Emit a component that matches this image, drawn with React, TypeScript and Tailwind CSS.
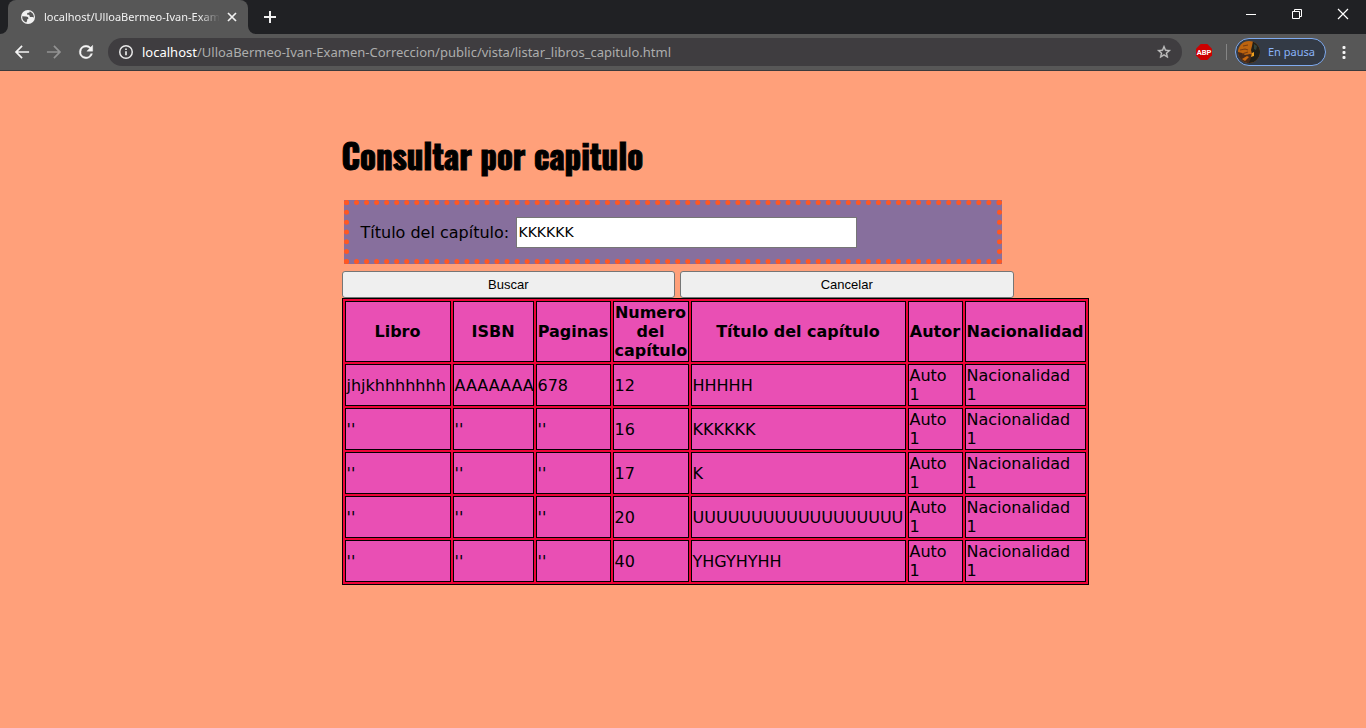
import { useState } from "react";

const headers = ["Libro", "ISBN", "Paginas", "Numero del capítulo", "Título del capítulo", "Autor", "Nacionalidad"];
const columnWidths = ["w-[106px]", "w-[81px]", "w-[75px]", "w-[76px]", "w-[215px]", "w-[55px]", "w-[121px]"];

const rows = [
  ["jhjkhhhhhhh", "AAAAAAA", "678", "12", "HHHHH", "Auto 1", "Nacionalidad 1"],
  ["''", "''", "''", "16", "KKKKKK", "Auto 1", "Nacionalidad 1"],
  ["''", "''", "''", "17", "K", "Auto 1", "Nacionalidad 1"],
  ["''", "''", "''", "20", "UUUUUUUUUUUUUUUUUU", "Auto 1", "Nacionalidad 1"],
  ["''", "''", "''", "40", "YHGYHYHH", "Auto 1", "Nacionalidad 1"],
];

function TabStrip() {
  return (
    <div className="flex h-[34px] items-stretch bg-[#202124]">
      <svg className="size-2 shrink-0 self-end" viewBox="0 0 8 8" aria-hidden="true">
        <path d="M8 0v8H0a8 8 0 0 0 8-8z" fill="#575757" />
      </svg>
      <div className="flex w-60 items-center rounded-t-lg bg-[#575757] pl-3 pr-2">
        <svg className="size-4 shrink-0" viewBox="0 0 16 16" aria-hidden="true">
          <circle cx="8" cy="8" r="7" fill="#f1f1f1" />
          <path d="M2.200 7.200L6 7.400c1.700.1 2.400.9 2.400 1.800 0 .7-.5 1-1.300 1v1.500c0 .6-.4 1-1 1.700C3.600 12.500 2 10.500 2.200 7.200zM9.600 2.400c.1.800-.3 1.300-1.100 1.400-.9.1-1.400.4-1.400 1.100 0 .6.5.8 1.200.8.900 0 1.200.5 1.300 1.200.1.800.7 1.200 1.500 1.200h1.500c.5 0 .9.300 1.200.7.400-3.200-1.400-5.600-4.200-6.400z" fill="#575757" />
        </svg>
        <span className="ml-2 w-44 shrink-0 whitespace-nowrap text-[11px] leading-4 text-[#f1f1f1] [mask-image:linear-gradient(to_right,black_88%,transparent)]">
          localhost/UlloaBermeo-Ivan-Exam
        </span>
        <button type="button" aria-label="Cerrar pestaña" className="ml-1 flex size-4 shrink-0 items-center justify-center">
          <svg className="size-4" viewBox="0 0 16 16" stroke="#f1f1f1" strokeWidth="1.7" aria-hidden="true">
            <path d="M4 4l8 8M12 4l-8 8" />
          </svg>
        </button>
      </div>
      <svg className="size-2 shrink-0 self-end" viewBox="0 0 8 8" aria-hidden="true">
        <path d="M0 0v8h8a8 8 0 0 1-8-8z" fill="#575757" />
      </svg>
      <button type="button" aria-label="Nueva pestaña" className="ml-1 flex w-5 items-center justify-center">
        <svg className="size-4" viewBox="0 0 16 16" stroke="#f1f1f1" strokeWidth="2" aria-hidden="true">
          <path d="M8 2v12M2 8h12" />
        </svg>
      </button>
      <div className="ml-auto flex h-7">
        <button type="button" aria-label="Minimizar" className="flex w-[46px] items-center justify-center">
          <svg className="size-3" viewBox="0 0 12 12" stroke="#fff" aria-hidden="true">
            <path d="M1 6.500h10" />
          </svg>
        </button>
        <button type="button" aria-label="Restaurar" className="flex w-[46px] items-center justify-center">
          <svg className="size-3" viewBox="0 0 12 12" fill="none" stroke="#fff" aria-hidden="true">
            <path d="M1.500 3.500h7v7h-7zM3.500 3.500v-2h7v7h-2" />
          </svg>
        </button>
        <button type="button" aria-label="Cerrar" className="flex w-[46px] items-center justify-center">
          <svg className="size-3" viewBox="0 0 12 12" stroke="#fff" strokeWidth="1.200" aria-hidden="true">
            <path d="M1 1l10 10M11 1L1 11" />
          </svg>
        </button>
      </div>
    </div>
  );
}

function Toolbar() {
  return (
    <div className="flex h-[37px] items-center border-b border-[#3a3a3c] bg-[#575757] pl-3">
      <button type="button" aria-label="Atrás" className="flex size-5 items-center justify-center">
        <svg className="size-5" viewBox="0 0 24 24" fill="#f5f5f5" aria-hidden="true">
          <path d="M20.500 11H7.200l5.600-5.600L11.400 4l-8 8 8 8 1.400-1.400L7.200 13h13.300z" />
        </svg>
      </button>
      <button type="button" aria-label="Adelante" className="ml-3 flex size-5 items-center justify-center">
        <svg className="size-5" viewBox="0 0 24 24" fill="#939393" aria-hidden="true">
          <path d="M3.500 11h13.300l-5.600-5.600L12.600 4l8 8-8 8-1.400-1.400 5.600-5.600H3.500z" />
        </svg>
      </button>
      <button type="button" aria-label="Recargar" className="ml-3 flex size-5 items-center justify-center">
        <svg className="size-5" viewBox="0 0 24 24" fill="#f5f5f5" stroke="#f5f5f5" strokeWidth="0.500" aria-hidden="true">
          <path d="M17.650 6.350A7.960 7.960 0 0 0 12 4a8 8 0 1 0 7.730 10h-2.080A6 6 0 1 1 12 6c1.660 0 3.140.69 4.220 1.780L13 11h7V4z" />
        </svg>
      </button>
      <div className="ml-3 flex h-7 flex-1 items-center rounded-full bg-[#3f3d40] px-2.5">
        <svg className="size-4 shrink-0" viewBox="0 0 16 16" fill="none" stroke="#e8e8e8" strokeWidth="1.500" aria-hidden="true">
          <circle cx="8" cy="8" r="6.250" />
          <path d="M8 7.200v4M8 4.500v1.500" strokeWidth="1.700" />
        </svg>
        <span className="ml-2 flex-1 whitespace-nowrap text-[13px] leading-5 text-[#adadad]">
          <span className="text-white">localhost</span>/UlloaBermeo-Ivan-Examen-Correccion/public/vista/listar_libros_capitulo.html
        </span>
        <button type="button" aria-label="Añadir a marcadores" className="flex size-4 items-center justify-center">
          <svg className="size-4" viewBox="0 0 24 24" fill="#c4c4c4" stroke="#c4c4c4" strokeWidth="0.500" aria-hidden="true">
            <path d="M22 9.240l-7.190-.62L12 2 9.190 8.630 2 9.240l5.460 4.730L5.820 21 12 17.270 18.180 21l-1.630-7.030zM12 15.400l-3.760 2.270 1-4.280-3.320-2.880 4.380-.38L12 6.100l1.710 4.040 4.380.38-3.320 2.880 1 4.280z" />
          </svg>
        </button>
      </div>
      <button type="button" aria-label="Adblock Plus" className="ml-3.5 flex size-4 items-center justify-center">
        <svg className="size-4" viewBox="0 0 16 16" aria-hidden="true">
          <path d="M4.700 0h6.600L16 4.700v6.600L11.300 16H4.700L0 11.300V4.700z" fill="#cc0000" />
          <text x="8" y="10.800" textAnchor="middle" fontSize="7.500" fontWeight="700" fontFamily="Roboto, sans-serif" fill="#fff">ABP</text>
        </svg>
      </button>
      <span className="ml-3.5 h-4 w-px bg-[#858585]" />
      <button type="button" className="ml-2 flex h-7 w-[91px] items-center rounded-full border border-[#7fabf0] bg-[#333a45] pl-0.5 text-[11px] text-[#8ab4f8]">
        <svg className="mr-2 size-[22px] shrink-0" viewBox="0 0 22 22" aria-hidden="true">
          <defs>
            <clipPath id="avatar">
              <circle cx="11" cy="11" r="11" />
            </clipPath>
          </defs>
          <g clipPath="url(#avatar)">
            <path d="M0 0h22v22H0z" fill="#bd640e" />
            <path d="M15 0l7 3v19H9l2-6 3-3-1-4 1-4z" fill="#211f18" />
            <path d="M0 11l4 1 3 2 5-1 2 1-3 8H0z" fill="#4a2a18" />
            <path d="M2 9l5-1 3 1M5 5l5-1M4 13l6-2" fill="none" stroke="#7a3d12" strokeWidth="1.200" />
            <path d="M4 18l5-3 2 1-4 4z" fill="#c9690f" />
            <path d="M14 12l2-1v4l-3 1z" fill="#f0a01c" />
            <path d="M16 3l3 2-1 4-2-1z" fill="#34443b" />
          </g>
        </svg>
        <span className="whitespace-nowrap">En pausa</span>
      </button>
      <button type="button" aria-label="Menú" className="ml-2 mr-3 flex size-5 items-center justify-center">
        <svg className="size-4" viewBox="0 0 16 16" fill="#f5f5f5" aria-hidden="true">
          <rect x="6.500" y="2" width="3" height="3" rx="1" />
          <rect x="6.500" y="7" width="3" height="3" rx="1" />
          <rect x="6.500" y="12" width="3" height="3" rx="1" />
        </svg>
      </button>
    </div>
  );
}

export default function App() {
  const [titulo, setTitulo] = useState("KKKKKK");
  const button =
    "h-[27px] flex-1 rounded-[3px] border border-[#767676] bg-[#efefef] font-['Liberation_Sans',Arial,sans-serif] text-[13px] text-black";

  return (
    <div className="flex min-h-screen flex-col bg-[#ffa07a] text-black">
      <header className="font-['Noto_Sans','Open_Sans',sans-serif]">
        <TabStrip />
        <Toolbar />
      </header>
      <main className="flex-1 pl-[25%] pt-[67px] font-[Verdana,'DejaVu_Sans',sans-serif] text-[16px] leading-[19px]">
        <h1 className="font-[Impact,Oswald,Anton,sans-serif] text-[33px] font-bold leading-9 [-webkit-text-stroke:1px_black]">
          Consultar por capitulo
        </h1>
        <form className="w-[672px] max-w-full" onSubmit={(e) => e.preventDefault()}>
          <fieldset className="ml-0.5 mr-3 mt-[26px] flex h-16 items-center border-[5px] border-dotted border-[#ff5722] bg-[#876f9d] pl-3">
            <label htmlFor="titulo" className="w-[155px] whitespace-nowrap">
              Título del capítulo:
            </label>
            <input
              id="titulo"
              type="text"
              value={titulo}
              onChange={(e) => setTitulo(e.target.value)}
              className="h-[31px] w-[341px] border border-[#767676] bg-white px-0.5 text-[14px]"
            />
          </fieldset>
          <div className="mt-[7px] flex gap-[5px]">
            <button type="submit" className={button}>
              Buscar
            </button>
            <button type="button" className={button} onClick={() => setTitulo("")}>
              Cancelar
            </button>
          </div>
        </form>
        <table className="w-[747px] table-fixed border-separate border-spacing-[2px] border border-black bg-[#ee0338]">
          <colgroup>
            {columnWidths.map((width) => (
              <col key={width} className={width} />
            ))}
          </colgroup>
          <thead>
            <tr>
              {headers.map((header) => (
                <th key={header} scope="col" className="border border-black bg-[#e94fb4] p-px text-center font-bold">
                  {header}
                </th>
              ))}
            </tr>
          </thead>
          <tbody>
            {rows.map((row) => (
              <tr key={row[3]}>
                {row.map((cell, i) => (
                  <td key={i} className="border border-black bg-[#e94fb4] p-px">
                    {cell}
                  </td>
                ))}
              </tr>
            ))}
          </tbody>
        </table>
      </main>
    </div>
  );
}
